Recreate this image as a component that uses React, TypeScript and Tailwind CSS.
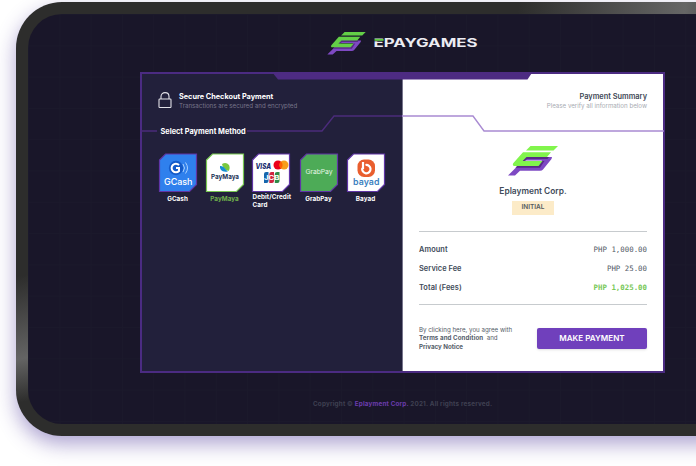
import React from "react";

function BrandMark({ className, green }: { className: string; green: string }) {
  return (
    <svg viewBox="0 0 50 30" className={className} aria-hidden="true">
      <path d="M17 11 H44 L43.5 13 L35 23.500 Q34 24.800 32 24.800 H12 L7 29.500 H0 L9.500 20 H29 L34 14.500 H14 Z" fill="#7e49c3" />
      <path d="M18 11 H41 L39.500 13 H19 L17 15 H14 Z M9 20 H30 L34 15 H36.500 L32 21.800 H7.500 Z" fill="#582b86" />
      <path d="M22.500 0 H50 L45.500 4.600 H18 Z" fill={green} />
      <path d="M15 6.300 H43 L39 11 H18.500 L14.500 15 H34.500 L30.500 20 H6.500 Q4 20 5.200 17.300 Z" fill={green} />
    </svg>
  );
}

function Tile({ id, edge, fill, children }: { id: string; edge: string; fill: string; children: React.ReactNode }) {
  return (
    <svg viewBox="0 0 40 40" className="h-10 w-10" aria-label={id}>
      <path d="M7.500 1 H38.500 V31.500 L31.500 38.500 H1.500 V7 Z" fill={fill} stroke={edge} strokeWidth="1.2" />
      {children}
    </svg>
  );
}

function Method({ label, green, children }: { label: string; green?: boolean; children: React.ReactNode }) {
  return (
    <div className="flex w-[47px] flex-col items-center">
      {children}
      <span className={"mt-[1.500px] text-[6.3px] leading-[8px] font-bold tracking-[0.05px] whitespace-nowrap " + (green ? "text-[#70b04c]" : "text-white")}>{label}</span>
    </div>
  );
}

function Row({ label, value, total }: { label: string; value: string; total?: boolean }) {
  return (
    <div className="flex h-[18.7px] items-center justify-between">
      <span className="text-[7.4px] font-semibold tracking-[0.06px] text-[#414b59]">{label}</span>
      <span className={"font-['DejaVu_Sans_Mono',monospace] text-[7.4px] " + (total ? "font-bold text-[#78c858]" : "text-[#535b67]")}>{value}</span>
    </div>
  );
}

export default function App() {
  return (
    <div className="h-[466px] w-[696px] overflow-hidden bg-white pt-[2px] pl-4 font-['Inter',sans-serif]">
      <div className="h-[434px] w-[760px] rounded-[46px] bg-[#2d2d2c] bg-[linear-gradient(170deg,transparent_63%,#646464_82%,transparent_92%),linear-gradient(95deg,transparent_66%,#666666_88%,#3a3a3a_96%)] bg-[size:12px_434px,760px_12px] bg-no-repeat p-3 shadow-[0_8px_20px_rgba(84,62,158,0.48)]">
        <div className="h-[410px] rounded-[34px] bg-[#191629] bg-[linear-gradient(#1b192b_1px,transparent_1px),linear-gradient(90deg,#1b192b_1px,transparent_1px)] bg-[size:31.300px_31.300px]">
          <header className="flex h-[58px] items-start pt-[18px] pl-[299px]">
            <BrandMark className="h-[23px] w-[39px]" green="#63cf47" />
            <svg viewBox="0 0 106 14" className="mt-1 ml-[7px] h-[14px] w-[106px]">
              <text x="0.500" y="11.300" textLength="104" lengthAdjust="spacingAndGlyphs" fontFamily="Inter, sans-serif" fontSize="11.400" fontWeight="700" fill="#ececf2">EPAYGAMES</text>
              <path d="M0.500 2.500 H10.600 V5.300 H0.500 Z" fill="#191629" />
              <path d="M1.500 2.900 H10.600 V4.800 H1.500 Z" fill="#63cf47" />
            </svg>
          </header>

          <main className="relative ml-[112px] flex h-[301px] w-[525px] border-2 border-[#4b2b82]">
            <section className="w-[261px] border-r border-[#77758c] bg-[#22203b]">
              <div className="flex h-[53px] items-start pt-[17px] pl-[15px]">
                <svg viewBox="0 0 16 18" className="h-[18px] w-4" fill="none" stroke="#e2e1e8" strokeWidth="1.1">
                  <rect x="2" y="8" width="12" height="8.500" rx="0.800" />
                  <path d="M4 8 V5.500 C4 0.300 12 0.300 12 5.500 V8" />
                </svg>
                <div className="ml-[6px] pt-px">
                  <div className="text-[7.3px] leading-[9px] font-bold text-white">Secure Checkout Payment</div>
                  <div className="text-[6.200px] leading-[10px] text-[#77758a]">Transactions are secured and encrypted</div>
                </div>
              </div>
              <h2 className="ml-[18.500px] text-[7.350px] leading-[9px] font-bold text-white">Select Payment Method</h2>
              <div className="mt-[17px] flex pl-3">
                <Method label="GCash">
                  <Tile id="GCash" edge="#6035a6" fill="#2f80ed">
                    <circle cx="18" cy="15" r="7.200" fill="#145bc9" />
                    <path d="M21 12 A4.300 4.300 0 1 0 21 18 V15 H18" fill="none" stroke="white" strokeWidth="2" />
                    <path d="M25 11 Q28 15 25 19 M27.500 9.500 Q31.500 15 27.500 20.500" fill="none" stroke="#a9d0ff" strokeWidth="1" />
                    <text x="6" y="31.500" textLength="28.500" fontSize="9" fontWeight="500" fontFamily="Inter, sans-serif" fill="white">GCash</text>
                  </Tile>
                </Method>
                <Method label="PayMaya" green>
                  <Tile id="PayMaya" edge="#78c752" fill="white">
                    <path d="M17 11 Q21 8.500 24 12 Q25.500 15.500 23.500 18 Q21 17.500 19 15 Q17 12.500 17 11 Z" fill="#79c83d" />
                    <path d="M15 13 Q18.500 12.500 20 15.500 Q22 18 23 18.500 Q18 19.500 16 17 Q14.500 15 15 13 Z" fill="#168fd0" />
                    <text x="6" y="26.300" textLength="28" lengthAdjust="spacingAndGlyphs" fontSize="6.800" fontWeight="700" fontFamily="Inter, sans-serif" fill="#1d3558">PayMaya</text>
                  </Tile>
                </Method>
                <div className="w-[47px] pl-[3px]">
                  <Tile id="Cards" edge="#6035a6" fill="white">
                    <text x="4.500" y="16" textLength="15.500" lengthAdjust="spacingAndGlyphs" fontSize="7" fontStyle="italic" fontWeight="800" fontFamily="Inter, sans-serif" fill="#182d70">VISA</text>
                    <circle cx="27" cy="12" r="4.500" fill="#eb001b" /><circle cx="33" cy="12" r="4.500" fill="#f79e1b" /><path d="M30 8.600 A4.500 4.500 0 0 1 30 15.400 A4.500 4.500 0 0 1 30 8.600" fill="#ff5f00" />
                    <path d="M15 19 H17.500 V28 Q17.500 30 15.500 30 H13 V21 Q13 19 15 19Z" fill="#1666ad" />
                    <path d="M20.500 19 H23 V28 Q23 30 21 30 H18.300 V21 Q18.300 19 20.500 19Z" fill="#cf2440" />
                    <path d="M26 19 H28.500 V28 Q28.500 30 26.500 30 H23.800 V21 Q23.800 19 26 19Z" fill="#2e8b47" />
                    <text x="13" y="26.700" textLength="15.500" lengthAdjust="spacingAndGlyphs" fontSize="5.500" fontWeight="700" fontFamily="Inter, sans-serif" fill="white">JCB</text>
                  </Tile>
                  <div className="mt-[-0.500px] ml-[1.500px] w-[44px] text-[6.3px] leading-[8px] font-bold tracking-[0.09px] whitespace-nowrap text-white">Debit/Credit<br />Card</div>
                </div>
                <Method label="GrabPay">
                  <Tile id="GrabPay" edge="#6035a6" fill="#4dab57">
                    <text x="6.500" y="21" textLength="27" fontSize="6.800" fontWeight="400" fontFamily="Inter, sans-serif" fill="#e5f6e5">GrabPay</text>
                  </Tile>
                </Method>
                <Method label="Bayad">
                  <Tile id="Bayad" edge="#6035a6" fill="white">
                    <rect x="11.500" y="6.500" width="17.500" height="17.500" rx="6.500" fill="#e95e2e" />
                    <path d="M17 9 V16 M19.500 12 A4.200 4.200 0 1 1 16.300 15" fill="none" stroke="white" strokeWidth="2.200" />
                    <text x="7" y="31.500" textLength="26.500" fontSize="8.800" fontWeight="600" fontFamily="Inter, sans-serif" fill="#3c7fc0">bayad</text>
                  </Tile>
                </Method>
              </div>
            </section>

            <section className="flex-1 bg-white px-4">
              <div className="pt-[18px] text-right">
                <div className="text-[7.4px] leading-[9px] font-semibold text-[#3e4856]">Payment Summary</div>
                <div className="text-[6.2px] leading-[9px] text-[#a7abb2]">Please verify all information below</div>
              </div>
              <div className="mt-9 flex h-[85px] flex-col items-center">
                <BrandMark className="h-[30px] w-[50px]" green="#81f54c" />
                <div className="mt-[8.500px] text-[8.4px] leading-[12px] font-semibold text-[#414b59]">Eplayment Corp.</div>
                <div className="mt-[4.500px] flex h-[14px] w-[42px] items-center justify-center bg-[#fcebc8] text-[6.500px] font-semibold text-[#555c60]">INITIAL</div>
              </div>
              <div className="h-[74px] border-y border-[#c7cbce] pt-[8.500px]">
                <Row label="Amount" value="PHP 1,000.00" />
                <Row label="Service Fee" value="PHP 25.00" />
                <Row label="Total (Fees)" value="PHP 1,025.00" total />
              </div>
              <div className="mt-[21px] flex items-start justify-between">
                <p className="text-[6.2px] leading-[8.4px] text-[#555d69]">By clicking here, you agree with<br /><b className="tracking-[0.08px]">Terms and Condition</b>&nbsp; and<br /><b>Privacy Notice</b></p>
                <button className="mt-[2px] h-[21px] w-[110px] rounded-[2px] bg-[#7040bc] text-[8.100px] font-semibold text-white shadow-sm">MAKE PAYMENT</button>
              </div>
            </section>

            <svg viewBox="0 0 525 64" className="pointer-events-none absolute -top-[2px] -left-[2px] h-16 w-[525px]" fill="none">
              <path d="M132 0 H392.500 L387.500 7.500 H138 Z" fill="#4d2b82" />
              <path d="M0 59 H17 M107 59 H182 L194 44 H262" stroke="#4b2b7b" strokeWidth="1.400" />
              <path d="M262 44 H333 L344 59 H524" stroke="#a98bd2" strokeWidth="1.400" />
            </svg>
          </main>

          <footer className="pt-[26px] pl-[285px] text-[6.300px] leading-[10px] font-bold tracking-[0.190px] text-[#3f4051]">Copyright © <span className="text-[#6b3cae]">Eplayment Corp.</span> 2021. All rights reserved.</footer>
        </div>
      </div>
    </div>
  );
}
